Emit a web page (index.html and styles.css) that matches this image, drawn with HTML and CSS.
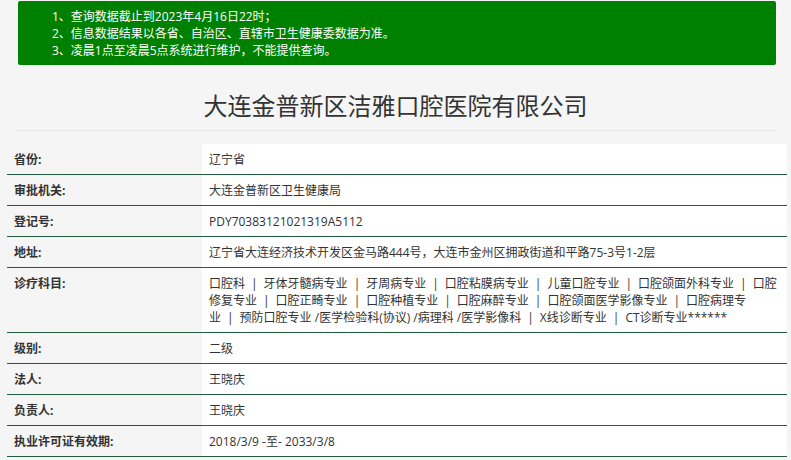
FILE: index.html
```html
<!DOCTYPE html>
<html lang="zh-CN">
<head>
<meta charset="utf-8">
<title>大连金普新区洁雅口腔医院有限公司</title>
<link rel="stylesheet" href="styles.css">
</head>
<body>
<div class="notice">
  <p>1、查询数据截止到2023年4月16日22时；</p>
  <p>2、信息数据结果以各省、自治区、直辖市卫生健康委数据为准。</p>
  <p>3、凌晨1点至凌晨5点系统进行维护，不能提供查询。</p>
</div>
<div class="head">
  <h1 class="title">大连金普新区洁雅口腔医院有限公司</h1>
  <hr class="rule">
</div>
<table class="info">
  <tr><th>省份:</th><td>辽宁省</td></tr>
  <tr><th>审批机关:</th><td>大连金普新区卫生健康局</td></tr>
  <tr><th>登记号:</th><td>PDY70383121021319A5112</td></tr>
  <tr><th>地址:</th><td>辽宁省大连经济技术开发区金马路444号，大连市金州区拥政街道和平路75-3号1-2层</td></tr>
  <tr><th>诊疗科目:</th><td class="multi">口腔科<span class="sep">|</span>牙体牙髓病专业<span class="sep">|</span>牙周病专业<span class="sep">|</span>口腔粘膜病专业<span class="sep">|</span>儿童口腔专业<span class="sep">|</span>口腔颌面外科专业<span class="sep">|</span>口腔<br>修复专业<span class="sep">|</span>口腔正畸专业<span class="sep">|</span>口腔种植专业<span class="sep">|</span>口腔麻醉专业<span class="sep">|</span>口腔颌面医学影像专业<span class="sep">|</span>口腔病理专<br>业<span class="sep">|</span>预防口腔专业 /医学检验科(协议) /病理科 /医学影像科<span class="sep">|</span>X线诊断专业<span class="sep">|</span>CT诊断专业******</td></tr>
  <tr><th>级别:</th><td>二级</td></tr>
  <tr><th>法人:</th><td>王晓庆</td></tr>
  <tr><th>负责人:</th><td>王晓庆</td></tr>
  <tr><th>执业许可证有效期:</th><td>2018/3/9 -至- 2033/3/8</td></tr>
</table>
</body>
</html>
```
FILE: styles.css
```css
html, body {
  margin: 0;
  padding: 0;
  background: #f5f5f5;
  font-family: "Open Sans", "Noto Sans CJK SC", sans-serif;
  font-size: 12px;
  color: #333;
}
.notice {
  margin: 1px 15px 0 18px;
  height: 64px;
  box-sizing: border-box;
  padding: 7px 0 0 34px;
  background: #008000;
  color: #fff;
  border-radius: 2px;
}
.notice p {
  margin: 0;
  line-height: 17px;
}
.head {
  padding: 0 15px;
}
.title {
  margin: 0;
  padding-top: 24px;
  text-align: center;
  font-weight: normal;
  font-size: 24px;
  line-height: 34px;
  color: #333;
}
.rule {
  margin: 7px 0 0 0;
  border: 0;
  border-top: 1px solid #e6e6e6;
  height: 0;
}
.info {
  margin: 13px 0 0 7px;
  width: 780px;
  border-collapse: collapse;
}
.info th, .info td {
  text-align: left;
  vertical-align: top;
  line-height: 17px;
  padding: 6.5px 7px;
  border-bottom: 1px solid #215c41;
}
.info th {
  width: 181px;
  font-weight: bold;
  background: #f5f5f5;
}
.info td {
  background: #fff;
  font-weight: normal;
}
.multi {
  white-space: nowrap;
}
.sep {
  margin: 0 6px;
}
```
